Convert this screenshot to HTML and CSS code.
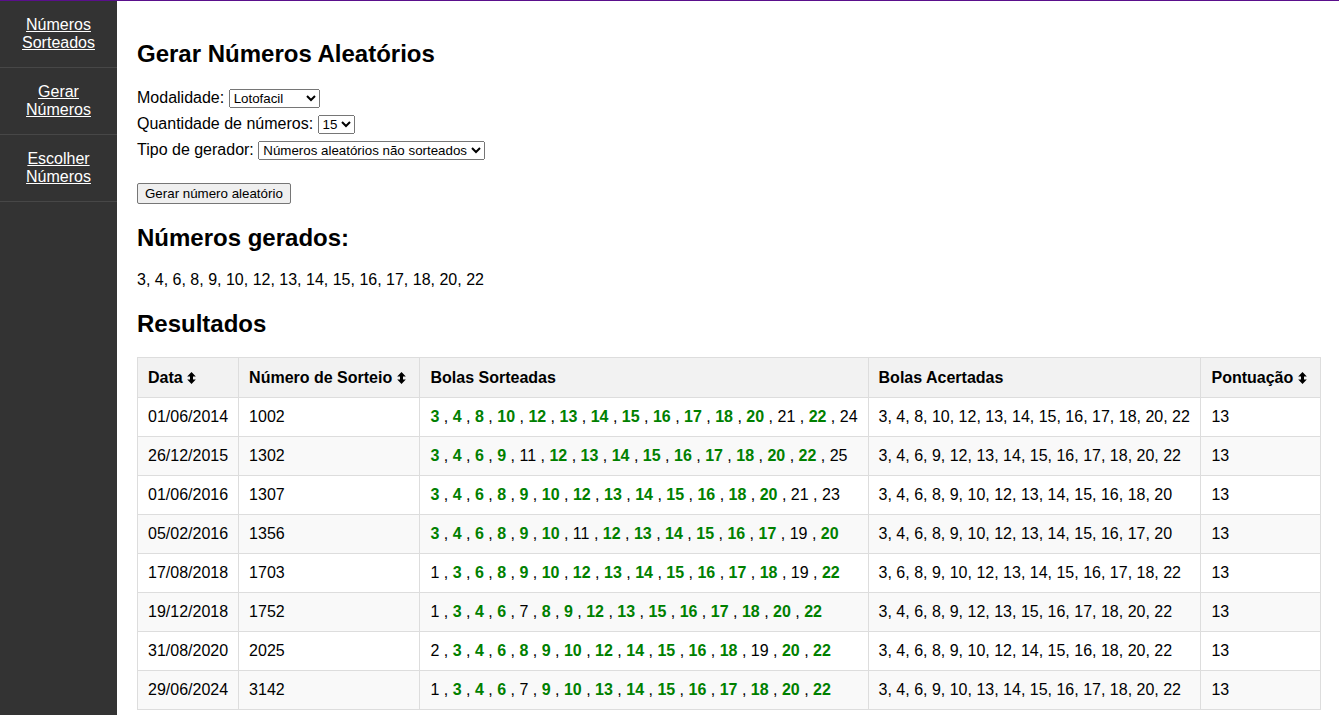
FILE: index.html
```html
<!DOCTYPE html>
<html lang="pt-BR">
<head>
<meta charset="utf-8">
<title>Gerar Números Aleatórios</title>
<link rel="stylesheet" href="styles.css">
</head>
<body>
<div class="layout">
  <nav class="sidebar">
    <a class="nav-link" href="#">Números Sorteados</a>
    <a class="nav-link" href="#">Gerar Números</a>
    <a class="nav-link" href="#">Escolher Números</a>
  </nav>
  <main class="content">
    <h2 class="heading">Gerar Números Aleatórios</h2>
    <div class="form">
      <div class="field">Modalidade: <select class="sel sel-mod"><option>Lotofacil</option><option>Mega-Sena</option><option>Quina</option></select></div>
      <div class="field">Quantidade de números: <select class="sel sel-qty"><option>15</option><option>16</option><option>17</option><option>18</option></select></div>
      <div class="field">Tipo de gerador: <select class="sel sel-type"><option>Números aleatórios não sorteados</option><option>Números aleatórios</option></select></div>
      <div class="actions"><button class="btn" type="button">Gerar número aleatório</button></div>
    </div>
    <h2 class="heading">Números gerados:</h2>
    <p class="generated">3, 4, 6, 8, 9, 10, 12, 13, 14, 15, 16, 17, 18, 20, 22</p>
    <h2 class="heading">Resultados</h2>
    <table class="results">
      <colgroup>
        <col class="c-data"><col class="c-num"><col class="c-bolas"><col class="c-acert"><col class="c-pont">
      </colgroup>
      <thead>
        <tr>
          <th>Data <svg class="sort" viewBox="0 0 9 12" width="9" height="12"><path d="M4.5 0 L8.8 4.6 H6 V7.4 H8.8 L4.5 12 L0.2 7.4 H3 V4.6 H0.2 Z"/></svg></th>
          <th>Número de Sorteio <svg class="sort" viewBox="0 0 9 12" width="9" height="12"><path d="M4.5 0 L8.8 4.6 H6 V7.4 H8.8 L4.5 12 L0.2 7.4 H3 V4.6 H0.2 Z"/></svg></th>
          <th>Bolas Sorteadas</th>
          <th>Bolas Acertadas</th>
          <th>Pontuação <svg class="sort" viewBox="0 0 9 12" width="9" height="12"><path d="M4.5 0 L8.8 4.6 H6 V7.4 H8.8 L4.5 12 L0.2 7.4 H3 V4.6 H0.2 Z"/></svg></th>
        </tr>
      </thead>
      <tbody>
        <tr>
          <td>01/06/2014</td><td>1002</td>
          <td><b class="hit">3</b> , <b class="hit">4</b> , <b class="hit">8</b> , <b class="hit">10</b> , <b class="hit">12</b> , <b class="hit">13</b> , <b class="hit">14</b> , <b class="hit">15</b> , <b class="hit">16</b> , <b class="hit">17</b> , <b class="hit">18</b> , <b class="hit">20</b> , 21 , <b class="hit">22</b> , 24</td>
          <td>3, 4, 8, 10, 12, 13, 14, 15, 16, 17, 18, 20, 22</td><td>13</td>
        </tr>
        <tr>
          <td>26/12/2015</td><td>1302</td>
          <td><b class="hit">3</b> , <b class="hit">4</b> , <b class="hit">6</b> , <b class="hit">9</b> , 11 , <b class="hit">12</b> , <b class="hit">13</b> , <b class="hit">14</b> , <b class="hit">15</b> , <b class="hit">16</b> , <b class="hit">17</b> , <b class="hit">18</b> , <b class="hit">20</b> , <b class="hit">22</b> , 25</td>
          <td>3, 4, 6, 9, 12, 13, 14, 15, 16, 17, 18, 20, 22</td><td>13</td>
        </tr>
        <tr>
          <td>01/06/2016</td><td>1307</td>
          <td><b class="hit">3</b> , <b class="hit">4</b> , <b class="hit">6</b> , <b class="hit">8</b> , <b class="hit">9</b> , <b class="hit">10</b> , <b class="hit">12</b> , <b class="hit">13</b> , <b class="hit">14</b> , <b class="hit">15</b> , <b class="hit">16</b> , <b class="hit">18</b> , <b class="hit">20</b> , 21 , 23</td>
          <td>3, 4, 6, 8, 9, 10, 12, 13, 14, 15, 16, 18, 20</td><td>13</td>
        </tr>
        <tr>
          <td>05/02/2016</td><td>1356</td>
          <td><b class="hit">3</b> , <b class="hit">4</b> , <b class="hit">6</b> , <b class="hit">8</b> , <b class="hit">9</b> , <b class="hit">10</b> , 11 , <b class="hit">12</b> , <b class="hit">13</b> , <b class="hit">14</b> , <b class="hit">15</b> , <b class="hit">16</b> , <b class="hit">17</b> , 19 , <b class="hit">20</b></td>
          <td>3, 4, 6, 8, 9, 10, 12, 13, 14, 15, 16, 17, 20</td><td>13</td>
        </tr>
        <tr>
          <td>17/08/2018</td><td>1703</td>
          <td>1 , <b class="hit">3</b> , <b class="hit">6</b> , <b class="hit">8</b> , <b class="hit">9</b> , <b class="hit">10</b> , <b class="hit">12</b> , <b class="hit">13</b> , <b class="hit">14</b> , <b class="hit">15</b> , <b class="hit">16</b> , <b class="hit">17</b> , <b class="hit">18</b> , 19 , <b class="hit">22</b></td>
          <td>3, 6, 8, 9, 10, 12, 13, 14, 15, 16, 17, 18, 22</td><td>13</td>
        </tr>
        <tr>
          <td>19/12/2018</td><td>1752</td>
          <td>1 , <b class="hit">3</b> , <b class="hit">4</b> , <b class="hit">6</b> , 7 , <b class="hit">8</b> , <b class="hit">9</b> , <b class="hit">12</b> , <b class="hit">13</b> , <b class="hit">15</b> , <b class="hit">16</b> , <b class="hit">17</b> , <b class="hit">18</b> , <b class="hit">20</b> , <b class="hit">22</b></td>
          <td>3, 4, 6, 8, 9, 12, 13, 15, 16, 17, 18, 20, 22</td><td>13</td>
        </tr>
        <tr>
          <td>31/08/2020</td><td>2025</td>
          <td>2 , <b class="hit">3</b> , <b class="hit">4</b> , <b class="hit">6</b> , <b class="hit">8</b> , <b class="hit">9</b> , <b class="hit">10</b> , <b class="hit">12</b> , <b class="hit">14</b> , <b class="hit">15</b> , <b class="hit">16</b> , <b class="hit">18</b> , 19 , <b class="hit">20</b> , <b class="hit">22</b></td>
          <td>3, 4, 6, 8, 9, 10, 12, 14, 15, 16, 18, 20, 22</td><td>13</td>
        </tr>
        <tr>
          <td>29/06/2024</td><td>3142</td>
          <td>1 , <b class="hit">3</b> , <b class="hit">4</b> , <b class="hit">6</b> , 7 , <b class="hit">9</b> , <b class="hit">10</b> , <b class="hit">13</b> , <b class="hit">14</b> , <b class="hit">15</b> , <b class="hit">16</b> , <b class="hit">17</b> , <b class="hit">18</b> , <b class="hit">20</b> , <b class="hit">22</b></td>
          <td>3, 4, 6, 9, 10, 13, 14, 15, 16, 17, 18, 20, 22</td><td>13</td>
        </tr>
      </tbody>
    </table>
  </main>
</div>
</body>
</html>
```
FILE: styles.css
```css
html, body {
  margin: 0;
  padding: 0;
}
body {
  font-family: "Liberation Sans", Arial, sans-serif;
  font-size: 16px;
  color: #000;
  background: #fff;
  border-top: 1px solid #5a0f8c;
}
.layout {
  display: flex;
  min-height: calc(100vh - 1px);
}
.sidebar {
  width: 117px;
  flex: 0 0 117px;
  background: #333333;
  display: flex;
  flex-direction: column;
}
.nav-link {
  display: block;
  color: #fff;
  text-decoration: underline;
  text-align: center;
  line-height: 18px;
  padding: 15px 10px 15px;
  border-bottom: 1px solid #474747;
}
.content {
  flex: 1;
  padding: 20px 18px 20px 20px;
  min-width: 0;
}
.heading {
  font-size: 24px;
  font-weight: bold;
  margin: 20px 0;
  line-height: 27.6px;
}
.content > .heading:first-child {
  margin-top: 19px;
}
.field {
  line-height: 20px;
  height: 20px;
  margin-bottom: 6px;
}
.sel {
  font-family: "Liberation Sans", Arial, sans-serif;
  font-size: 13.33px;
  height: 19px;
  vertical-align: baseline;
}
.sel-mod { width: 91px; }
.sel-qty { width: 37px; }
.sel-type { width: 227px; }
.actions {
  margin-top: 23px;
  line-height: 21px;
}
.btn {
  font-family: "Liberation Sans", Arial, sans-serif;
  font-size: 13.33px;
  line-height: 15px;
  padding: 2px 7px;
  border: 1px solid #767676;
  border-radius: 2px;
  background: #efefef;
  color: #000;
  vertical-align: top;
}
.generated {
  margin: 20px 0;
  line-height: 18.4px;
}
.results {
  width: 100%;
  border-collapse: collapse;
}
.c-data { width: 100px; }
.c-num { width: 182px; }
.c-bolas { width: 448px; }
.c-acert { width: 333px; }
.c-pont { width: 120px; }
.results th,
.results td {
  border: 1px solid #dddddd;
  padding: 10px;
  text-align: left;
  white-space: nowrap;
  line-height: 18px;
}
.results th {
  background: #f2f2f2;
  font-weight: bold;
  line-height: 19px;
}
.results tbody tr:nth-child(even) {
  background: #f9f9f9;
}
.sort {
  display: inline-block;
  vertical-align: -1px;
  fill: #000;
}
.hit {
  color: #008000;
  font-weight: bold;
}
```
